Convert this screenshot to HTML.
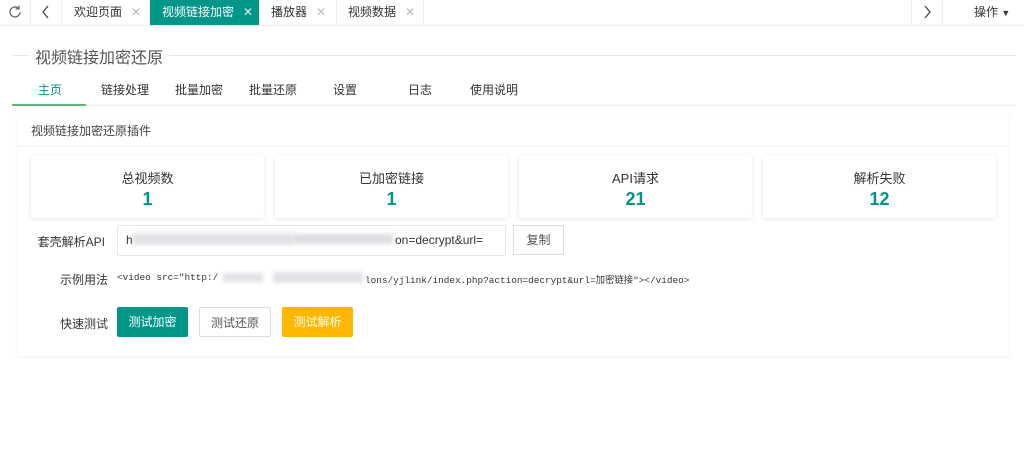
<!DOCTYPE html>
<html><head><meta charset="utf-8"><style>
*{margin:0;padding:0;box-sizing:border-box}
body{width:1024px;height:470px;background:#fff;font-family:"Liberation Sans","Noto Sans CJK SC",sans-serif;font-size:12px;color:#333;position:relative;overflow:hidden}
.abs{position:absolute;white-space:nowrap}
.tabbar{position:absolute;left:0;top:0;width:1024px;height:26px;border-bottom:1px solid #eee;}
.t{position:absolute;top:0;height:25px;line-height:24px;border-right:1px solid #eee;font-size:12px;color:#333;white-space:nowrap}
.t .x{color:#bbb;margin-left:9px;font-size:12px}
.nav span{position:absolute;top:81px;font-size:12px;color:#333}
.card{position:absolute;top:155px;width:233px;height:63px;background:#fff;border-radius:3px;box-shadow:0 1px 4px rgba(0,0,0,.1);text-align:center}
.card .a{margin-top:13px;font-size:13px;color:#333}
.card .b{font-size:18px;font-weight:bold;color:#009688;margin-top:2px}
.btn{position:absolute;top:307px;height:30px;line-height:30px;width:72px;text-align:center;font-size:12px;border-radius:2px}
.blur{position:absolute;background:#d6d6dc;filter:blur(2px);opacity:.7}
.mono{font-family:'Liberation Mono','Noto Sans CJK SC',monospace;font-size:9.4px;color:#333;white-space:pre}
</style></head><body>
<div class="tabbar">
<div class="t" style="left:0;width:31px;text-align:center"><svg width="16" height="16" viewBox="0 0 16 16" style="margin-top:4px"><path d="M13 8a5 5 0 1 1-1.5-3.6" fill="none" stroke="#666" stroke-width="1.3"/><path d="M12 1.5v3.3H8.7" fill="none" stroke="#666" stroke-width="1.3"/></svg></div>
<div class="t" style="left:31px;width:31px;text-align:center"><svg width="10" height="14" viewBox="0 0 10 14" style="margin-top:5px"><path d="M7 1L2 7l5 6" fill="none" stroke="#444" stroke-width="1.3"/></svg></div>
<div class="t" style="left:62px;width:88px;padding-left:12px">欢迎页面<span class="x">✕</span></div>
<div class="t" style="left:150px;width:109px;padding-left:12px;background:#009688;color:#fff;border-right:none">视频链接加密<span class="x" style="color:#e0f0ee">✕</span></div>
<div class="t" style="left:259px;width:78px;padding-left:12px">播放器<span class="x">✕</span></div>
<div class="t" style="left:337px;width:87px;padding-left:11px">视频数据<span class="x">✕</span></div>
<div class="t" style="left:911px;width:32px;border-left:1px solid #eee;text-align:center"><svg width="10" height="14" viewBox="0 0 10 14" style="margin-top:5px"><path d="M3 1l5 6-5 6" fill="none" stroke="#444" stroke-width="1.3"/></svg></div>
<div class="t" style="left:943px;width:81px;padding-left:31px;border-right:none">操作 <span style="font-size:9px">▼</span></div>
</div>
<div class="abs" style="left:12px;top:55px;width:1004px;height:1px;background:#e6e6e6"></div>
<div class="abs" style="left:29px;top:44px;background:#fff;padding:0 6px;font-size:16px;color:#555">视频链接加密还原</div>
<div class="nav">
<span style="left:38px;color:#009688">主页</span><span style="left:101px">链接处理</span><span style="left:175px">批量加密</span><span style="left:249px">批量还原</span><span style="left:333px">设置</span><span style="left:408px">日志</span><span style="left:470px">使用说明</span>
</div>
<div class="abs" style="left:12px;top:105px;width:1004px;height:1px;background:#eee"></div>
<div class="abs" style="left:12px;top:104px;width:74px;height:2px;background:#5FB878"></div>
<div class="abs" style="left:18px;top:114px;width:990px;height:242px;box-shadow:0 1px 3px rgba(0,0,0,.06);border-radius:2px"></div>
<div class="abs" style="left:18px;top:146px;width:990px;height:1px;background:#f3f3f3"></div>
<div class="abs" style="left:31px;top:122px;color:#444">视频链接加密还原插件</div>
<div class="card" style="left:31px"><div class="a">总视频数</div><div class="b">1</div></div>
<div class="card" style="left:275px"><div class="a">已加密链接</div><div class="b">1</div></div>
<div class="card" style="left:519px"><div class="a">API请求</div><div class="b">21</div></div>
<div class="card" style="left:763px"><div class="a">解析失败</div><div class="b">12</div></div>
<div class="abs" style="left:20px;top:233px;width:85px;text-align:right;font-size:12px">套壳解析API</div>
<div class="abs" style="left:117px;top:225px;width:389px;height:31px;border:1px solid #e6e6e6;border-radius:2px"></div>
<div class="abs" style="left:126px;top:233px;font-size:12px">h</div>
<div class="blur" style="left:133px;top:233px;width:160px;height:12px"></div>
<div class="blur" style="left:293px;top:234px;width:100px;height:10px;background:#cfcfd6"></div>
<div class="abs" style="left:395px;top:233px;font-size:12px">on=decrypt&amp;url=</div>
<div class="abs" style="left:513px;top:225px;width:51px;height:30px;border:1px solid #ddd;border-radius:2px;text-align:center;line-height:28px;color:#555">复制</div>
<div class="abs" style="left:60px;top:271px;font-size:12px">示例用法</div>
<div class="abs mono" style="left:117px;top:272px">&lt;video src="http:/</div>
<div class="blur" style="left:223px;top:273px;width:40px;height:9px"></div>
<div class="blur" style="left:273px;top:272px;width:90px;height:11px"></div>
<div class="abs mono" style="left:365px;top:272px">lons/yjlink/index.php?action=decrypt&amp;url=加密链接"&gt;&lt;/video&gt;</div>
<div class="abs" style="left:60px;top:315px;font-size:12px">快速测试</div>
<div class="btn" style="left:117px;background:#009688;color:#fff;width:71px">测试加密</div>
<div class="btn" style="left:199px;border:1px solid #ddd;color:#555">测试还原</div>
<div class="btn" style="left:282px;background:#FFB800;color:#fff;width:71px">测试解析</div>
</body></html>
